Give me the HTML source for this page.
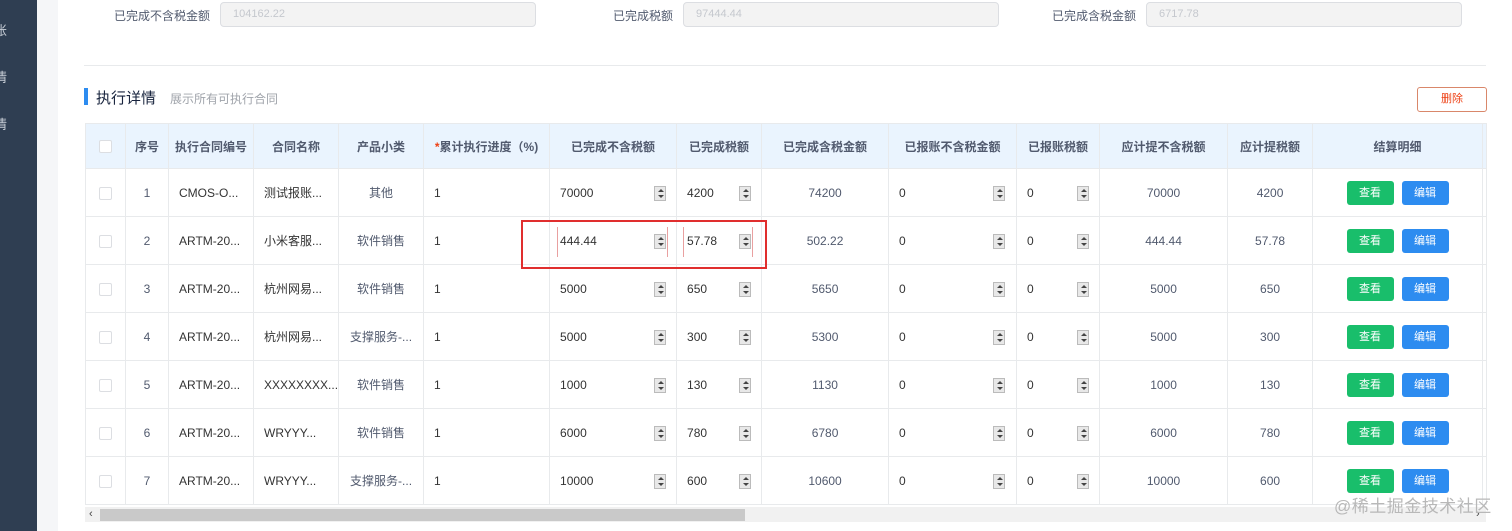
<!DOCTYPE html>
<html><head><meta charset="utf-8">
<style>
*{box-sizing:border-box;margin:0;padding:0}
body{width:1512px;height:531px;overflow:hidden;background:#fff;font-family:"Liberation Sans","Noto Sans CJK SC",sans-serif;font-size:12px;color:#515a6e;position:relative}
.side{position:absolute;left:0;top:0;width:37px;height:531px;background:#2f3e52;color:#c8ced6;font-size:13px}
.side span{position:absolute;left:-6px}
.gap{position:absolute;left:37px;top:0;width:21px;height:531px;background:#f5f6f8}
.lab{position:absolute;top:7px;font-size:12px;color:#515a6e;text-align:right}
.inp{position:absolute;top:2px;height:25px;border:1px solid #dcdee2;border-radius:4px;background:#f3f3f3;color:#c5c8ce;padding-left:12px;line-height:23px;font-size:11px}
.hr{position:absolute;left:84px;top:65px;width:1402px;height:1px;background:#e8eaec}
.bar{position:absolute;left:84px;top:88px;width:4px;height:17px;background:#2d8cf0}
.title{position:absolute;left:96px;top:87px;font-size:15px;color:#17233d}
.sub{position:absolute;left:170px;top:90px;font-size:12px;color:#a0a4ab}
.del{position:absolute;left:1417px;top:87px;width:70px;height:25px;border:1px solid #d9876a;border-radius:3px;color:#ed4014;font-size:11px;text-align:center;line-height:23px}
table{position:absolute;left:85px;top:123px;border-collapse:collapse;table-layout:fixed}
td,th{border:1px solid #e8eaec;height:48px;text-align:center;font-weight:normal;white-space:nowrap;overflow:hidden;font-size:12px;color:#515a6e;position:relative}
th{height:45px;background:#eaf4fe;color:#515a6e;font-weight:bold;font-size:12px}
td.l{text-align:left;padding-left:10px;color:#333}
.cb{display:inline-block;width:13px;height:13px;border:1px solid #dcdee2;border-radius:2px;background:#fff;vertical-align:middle}
.sp{position:absolute;top:17px;width:12px;height:15px;border:1px solid #bbb;background:#e8e8e8}
.sp:before{content:"";position:absolute;left:3px;top:2px;border:3px solid transparent;border-bottom:3px solid #444;border-top:0}
.sp:after{content:"";position:absolute;left:3px;bottom:2px;border:3px solid transparent;border-top:3px solid #444;border-bottom:0}
.btn{display:inline-block;width:47px;height:24px;border-radius:3px;color:#fff;line-height:24px;font-size:11px;margin:0 4px}
.g{background:#19be6b}.b{background:#2d8cf0}
.red{position:absolute;left:521px;top:220px;width:246px;height:49px;border:2px solid #e02e2e}
.pk{position:absolute;border:1px solid #e9a0a0;border-top:none;border-bottom:none}
.scroll{position:absolute;left:85px;top:507px;width:1401px;height:15px;background:#f1f1f1}
.thumb{position:absolute;left:100px;top:509px;width:645px;height:12px;background:#c9c9c9}
.wm{position:absolute;left:1334px;top:492px;font-size:17px;color:#b8b8b8;letter-spacing:0.5px}
</style></head><body>
<div class="side"><span style="top:20px">账</span><span style="top:67px">情</span><span style="top:114px">情</span></div>
<div class="gap"></div>
<div class="lab" style="left:100px;width:110px">已完成不含税金额</div>
<div class="inp" style="left:220px;width:316px">104162.22</div>
<div class="lab" style="left:560px;width:113px">已完成税额</div>
<div class="inp" style="left:683px;width:316px">97444.44</div>
<div class="lab" style="left:1026px;width:110px">已完成含税金额</div>
<div class="inp" style="left:1146px;width:316px">6717.78</div>
<div class="hr"></div>
<div class="bar"></div><div class="title">执行详情</div><div class="sub">展示所有可执行合同</div>
<div class="del">删除</div>
<table>
<colgroup><col style="width:40px"><col style="width:43px"><col style="width:85px"><col style="width:85px"><col style="width:85px"><col style="width:126px"><col style="width:127px"><col style="width:85px"><col style="width:127px"><col style="width:128px"><col style="width:83px"><col style="width:128px"><col style="width:85px"><col style="width:170px"><col style="width:4px"></colgroup>
<tr><th><span class="cb"></span></th><th>序号</th><th>执行合同编号</th><th>合同名称</th><th>产品小类</th><th><span style="color:#ed4014">*</span>累计执行进度（%)</th><th>已完成不含税额</th><th>已完成税额</th><th>已完成含税金额</th><th>已报账不含税金额</th><th>已报账税额</th><th>应计提不含税额</th><th>应计提税额</th><th>结算明细</th><th></th></tr>
<tr><td><span class="cb"></span></td><td>1</td><td class="l">CMOS-O...</td><td class="l">测试报账...</td><td>其他</td><td class="l">1</td><td class="l">70000<span class="sp" style="left:104px"></span></td><td class="l">4200<span class="sp" style="left:62px"></span></td><td>74200</td><td class="l">0<span class="sp" style="left:104px"></span></td><td class="l">0<span class="sp" style="left:60px"></span></td><td>70000</td><td>4200</td><td><span class="btn g">查看</span><span class="btn b">编辑</span></td><td></td></tr>
<tr><td><span class="cb"></span></td><td>2</td><td class="l">ARTM-20...</td><td class="l">小米客服...</td><td>软件销售</td><td class="l">1</td><td class="l">444.44<span class="sp" style="left:104px"></span></td><td class="l">57.78<span class="sp" style="left:62px"></span></td><td>502.22</td><td class="l">0<span class="sp" style="left:104px"></span></td><td class="l">0<span class="sp" style="left:60px"></span></td><td>444.44</td><td>57.78</td><td><span class="btn g">查看</span><span class="btn b">编辑</span></td><td></td></tr>
<tr><td><span class="cb"></span></td><td>3</td><td class="l">ARTM-20...</td><td class="l">杭州网易...</td><td>软件销售</td><td class="l">1</td><td class="l">5000<span class="sp" style="left:104px"></span></td><td class="l">650<span class="sp" style="left:62px"></span></td><td>5650</td><td class="l">0<span class="sp" style="left:104px"></span></td><td class="l">0<span class="sp" style="left:60px"></span></td><td>5000</td><td>650</td><td><span class="btn g">查看</span><span class="btn b">编辑</span></td><td></td></tr>
<tr><td><span class="cb"></span></td><td>4</td><td class="l">ARTM-20...</td><td class="l">杭州网易...</td><td>支撑服务-...</td><td class="l">1</td><td class="l">5000<span class="sp" style="left:104px"></span></td><td class="l">300<span class="sp" style="left:62px"></span></td><td>5300</td><td class="l">0<span class="sp" style="left:104px"></span></td><td class="l">0<span class="sp" style="left:60px"></span></td><td>5000</td><td>300</td><td><span class="btn g">查看</span><span class="btn b">编辑</span></td><td></td></tr>
<tr><td><span class="cb"></span></td><td>5</td><td class="l">ARTM-20...</td><td class="l">XXXXXXXX...</td><td>软件销售</td><td class="l">1</td><td class="l">1000<span class="sp" style="left:104px"></span></td><td class="l">130<span class="sp" style="left:62px"></span></td><td>1130</td><td class="l">0<span class="sp" style="left:104px"></span></td><td class="l">0<span class="sp" style="left:60px"></span></td><td>1000</td><td>130</td><td><span class="btn g">查看</span><span class="btn b">编辑</span></td><td></td></tr>
<tr><td><span class="cb"></span></td><td>6</td><td class="l">ARTM-20...</td><td class="l">WRYYY...</td><td>软件销售</td><td class="l">1</td><td class="l">6000<span class="sp" style="left:104px"></span></td><td class="l">780<span class="sp" style="left:62px"></span></td><td>6780</td><td class="l">0<span class="sp" style="left:104px"></span></td><td class="l">0<span class="sp" style="left:60px"></span></td><td>6000</td><td>780</td><td><span class="btn g">查看</span><span class="btn b">编辑</span></td><td></td></tr>
<tr><td><span class="cb"></span></td><td>7</td><td class="l">ARTM-20...</td><td class="l">WRYYY...</td><td>支撑服务-...</td><td class="l">1</td><td class="l">10000<span class="sp" style="left:104px"></span></td><td class="l">600<span class="sp" style="left:62px"></span></td><td>10600</td><td class="l">0<span class="sp" style="left:104px"></span></td><td class="l">0<span class="sp" style="left:60px"></span></td><td>10000</td><td>600</td><td><span class="btn g">查看</span><span class="btn b">编辑</span></td><td></td></tr>
</table>
<div class="pk" style="left:557px;top:227px;width:111px;height:30px"></div>
<div class="pk" style="left:683px;top:227px;width:70px;height:30px"></div>
<div class="red"></div>
<div class="scroll"></div><div class="thumb"></div>
<div style="position:absolute;left:89px;top:508px;font-size:11px;color:#444">‹</div>
<div style="position:absolute;left:1476px;top:508px;font-size:11px;color:#444">›</div>
<div class="wm">@稀土掘金技术社区</div>
</body></html>
